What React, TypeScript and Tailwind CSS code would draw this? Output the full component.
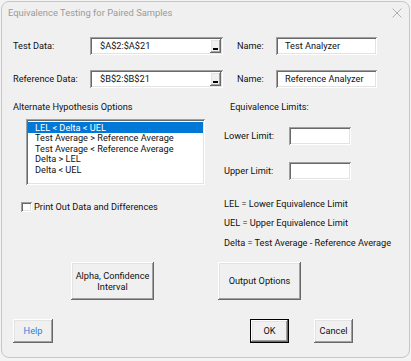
import React from "react";

const raised =
  "bg-[#f0f0f0] shadow-[inset_-1px_-1px_0_#696969,inset_1px_1px_0_#ffffff,inset_-2px_-2px_0_#a0a0a0,inset_2px_2px_0_#e3e3e3]";
const sunken =
  "bg-white shadow-[inset_1px_1px_0_#a0a0a0,inset_-1px_-1px_0_#ffffff,inset_2px_2px_0_#696969,inset_-2px_-2px_0_#e3e3e3]";

function RefEdit({ value }: { value: string }) {
  return (
    <div className={`${sunken} w-[133px] h-[18px] flex items-center pl-[10px] pr-[2px]`}>
      <span className="flex-1 leading-none">{value}</span>
      <div className={`${raised} w-[11px] h-[14px] flex items-end justify-center pb-[3px]`}>
        <div className="w-[5px] h-[2px] bg-black mr-[1px]" />
      </div>
    </div>
  );
}

function TextBox({ value, w }: { value?: string; w: string }) {
  return (
    <div className={`${sunken} ${w} h-[18px] flex items-center pl-[9px]`}>
      <span className="leading-none">{value}</span>
    </div>
  );
}

export default function App() {
  const options = [
    "LEL < Delta < UEL",
    "Test Average > Reference Average",
    "Test Average < Reference Average",
    "Delta > LEL",
    "Delta < UEL",
  ];
  return (
    <div
      className="w-[411px] h-[361px] bg-[#f3f3f3] pt-[1px] pl-[1px] text-[#111]"
      style={{ fontFamily: 'Roboto, "Liberation Sans", Arial, sans-serif' }}
    >
      <div className="w-[409px] h-[357px] border border-[#c6c6c6] rounded-[8px] bg-[#f0f0f0] flex flex-col text-[9.2px]">
        {/* title bar */}
        <div className="h-[22px] flex items-center justify-between pl-[6px] pr-[6px]">
          <span className="text-[9.4px] text-[#9a9a9a]">Equivalence Testing for Paired Samples</span>
          <svg width="10" height="10" viewBox="0 0 10 10" className="mr-[1px]">
            <path d="M0.5 0.5 L9.5 9.5 M9.5 0.5 L0.5 9.5" stroke="#a8a8a8" strokeWidth="0.9" />
          </svg>
        </div>

        {/* row 1 */}
        <div className="mt-[13px] h-[18px] flex items-center pl-[11px]">
          <span className="w-[77px]">Test Data:</span>
          <RefEdit value="$A$2:$A$21" />
          <span className="ml-[14px] w-[39px]">Name:</span>
          <TextBox value="Test Analyzer" w="w-[101px]" />
        </div>

        {/* row 2 */}
        <div className="mt-[15px] h-[18px] flex items-center pl-[11px]">
          <span className="w-[77px]">Reference Data:</span>
          <RefEdit value="$B$2:$B$21" />
          <span className="ml-[14px] w-[39px]">Name:</span>
          <TextBox value="Reference Analyzer" w="w-[101px]" />
        </div>

        {/* headers */}
        <div className="mt-[13px] h-[12px] flex items-center pl-[11px]">
          <span className="w-[217px]">Alternate Hypothesis Options</span>
          <span>Equivalence Limits:</span>
        </div>

        {/* middle */}
        <div className="flex pl-[11px]">
          <div className="w-[211px] flex flex-col">
            <div className={`${sunken} ml-[13px] mt-[6px] w-[179px] h-[66px] pt-[3px] px-[2px]`}>
              {options.map((o, i) => (
                <div
                  key={o}
                  className={`h-[10.6px] flex items-center pl-[7px] leading-none ${
                    i === 0 ? "bg-[#0078d7] text-white" : ""
                  }`}
                >
                  {o}
                </div>
              ))}
            </div>
            <div className="mt-[16px] ml-[8px] flex items-center h-[12px]">
              <div className={`${sunken} w-[11px] h-[10px]`} />
              <span className="ml-[2px]">Print Out Data and Differences</span>
            </div>
          </div>

          <div className="flex flex-col">
            <div className="mt-[14px] h-[18px] flex items-center">
              <span className="w-[65px]">Lower Limit:</span>
              <TextBox w="w-[62px]" />
            </div>
            <div className="mt-[17px] h-[18px] flex items-center">
              <span className="w-[65px]">Upper Limit:</span>
              <TextBox w="w-[62px]" />
            </div>
            <div className="mt-[18px] h-[12px] flex items-center">LEL = Lower Equivalence Limit</div>
            <div className="mt-[7px] h-[12px] flex items-center">UEL = Upper Equivalence Limit</div>
            <div className="mt-[8px] h-[12px] flex items-center">
              Delta = Test Average - Reference Average
            </div>
          </div>
        </div>

        {/* big buttons */}
        <div className="mt-[13px] flex pl-[69px] gap-[64px]">
          <div className={`${raised} w-[83px] h-[38px] flex items-center justify-center text-center leading-[11px]`}>
            Alpha, Confidence
            <br />
            Interval
          </div>
          <div className={`${raised} w-[83px] h-[38px] flex items-center justify-center`}>Output Options</div>
        </div>

        {/* bottom buttons */}
        <div className="mt-[19px] flex pl-[11px]">
          <div className={`${raised} w-[40px] h-[24px] flex items-center justify-center text-[#2f7fdc]`}>Help</div>
          <div className="ml-[197px] w-[39px] h-[24px] border border-black">
            <div className={`${raised} w-full h-full flex items-center justify-center`}>OK</div>
          </div>
          <div className={`${raised} ml-[25px] w-[39px] h-[24px] flex items-center justify-center`}>Cancel</div>
        </div>
      </div>
    </div>
  );
}
